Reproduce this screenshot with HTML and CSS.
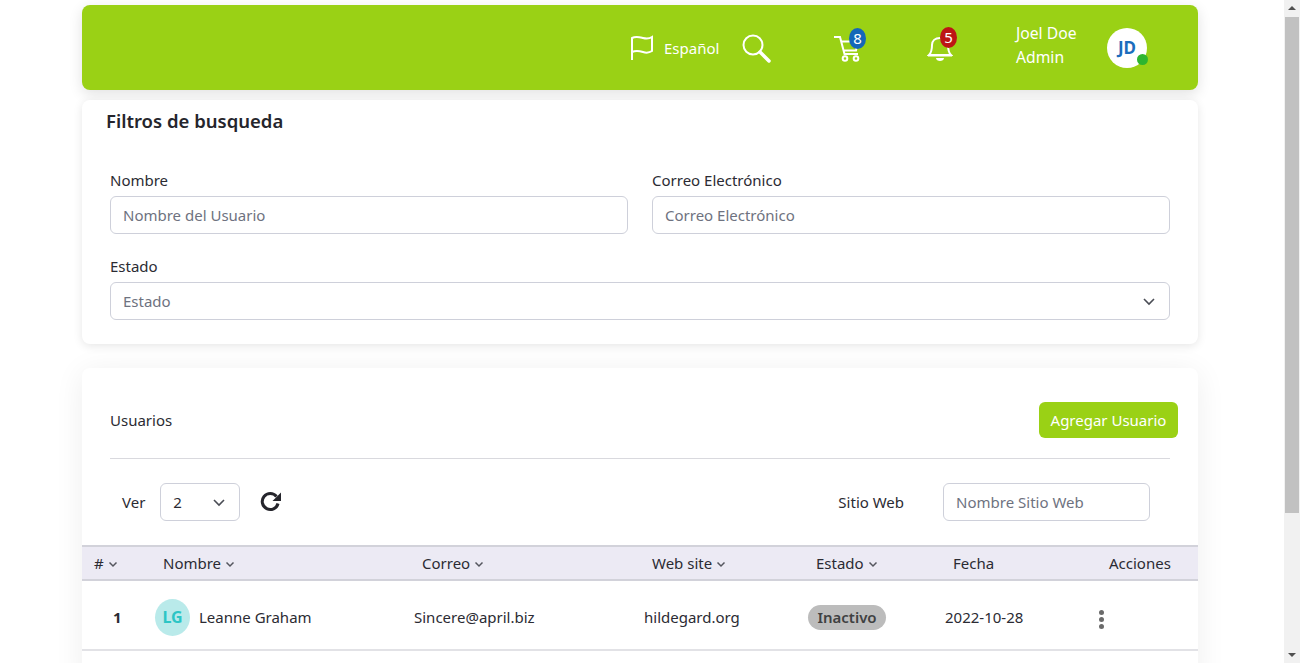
FILE: index.html
```html
<!DOCTYPE html>
<html lang="es">
<head>
    <meta charset="UTF-8">
    <title>Usuarios</title>
    <link rel="stylesheet" href="styles.css">
</head>
<body>
    <div class="page">
        <main class="content">
            <header class="topbar">
                <svg class="icon-flag" width="24" height="26" viewBox="0 0 24 26"><path d="M2 25V3c4-2 7-1 11 0s6 1 9-1v14c-3 2-6 2-9 1s-7-2-11 0"/></svg>
                <span class="lang">Español</span>
                <svg class="icon-search" width="30" height="30" viewBox="0 0 30 30"><circle cx="11" cy="11" r="9.5"/><path class="thick" d="M18 18l9 9"/></svg>
                <div class="icon-badge cart-wrap">
                    <svg width="28" height="28" viewBox="0 0 28 28"><path d="M1 2h6l4.500 17h13.500M8 6.500h17l-2 9H10"/><circle cx="12" cy="23.500" r="2.300"/><circle cx="23" cy="23.500" r="2.300"/></svg>
                    <span class="badge badge-blue">8</span>
                </div>
                <div class="icon-badge bell-wrap">
                    <svg width="26" height="28" viewBox="0 0 26 28"><path d="M2 21c3-3 3-6 3-10 0-4 3-7 8-7s8 3 8 7c0 4 0 7 3 10zM1 21.500h24"/><path class="filled" d="M9 24h8c0 2-2 3-4 3s-4-1-4-3z"/></svg>
                    <span class="badge badge-red">5</span>
                </div>
                <div class="user-info">
                    <span>Joel Doe</span>
                    <span>Admin</span>
                </div>
                <div class="avatar-top">JD<span class="online"></span></div>
            </header>

            <section class="card filters">
                <h2 class="filters-title">Filtros de busqueda</h2>
                <div class="filters-grid">
                    <div class="field">
                        <label for="nombre">Nombre</label>
                        <input type="text" id="nombre" placeholder="Nombre del Usuario">
                    </div>
                    <div class="field">
                        <label for="correo">Correo Electrónico</label>
                        <input type="text" id="correo" placeholder="Correo Electrónico">
                    </div>
                    <div class="field field-wide">
                        <label for="estado">Estado</label>
                        <div class="select muted" id="estado">Estado
                            <svg class="chevron" width="14" height="14" viewBox="0 0 14 14"><path d="M2 5l5 5 5-5"/></svg>
                        </div>
                    </div>
                </div>
            </section>

            <section class="card users">
                <div class="users-head">
                    <span>Usuarios</span>
                    <button type="button" class="btn-add">Agregar Usuario</button>
                </div>
                <hr class="divider">
                <div class="tools">
                    <span class="tools-ver">Ver</span>
                    <div class="select select-small">2
                        <svg class="chevron" width="14" height="14" viewBox="0 0 14 14"><path d="M2 5l5 5 5-5"/></svg>
                    </div>
                    <svg class="icon-refresh" width="22" height="22" viewBox="0 0 22 22"><path d="M18 12.500A8 8 0 1 1 16.500 5.500"/><path class="filled" d="M21 1.500v8.500h-8.500z"/></svg>
                    <span class="tools-site">Sitio Web</span>
                    <input type="text" class="site-input" placeholder="Nombre Sitio Web">
                </div>
                <table class="users-table">
                    <colgroup>
                        <col class="c-num"><col class="c-name"><col class="c-mail"><col class="c-web"><col class="c-state"><col class="c-date"><col class="c-act">
                    </colgroup>
                    <thead>
                        <tr>
                            <th class="th-num"># <svg class="sort" width="10" height="10" viewBox="0 0 10 10"><path d="M1.500 3.500L5 7l3.500-3.500"/></svg></th>
                            <th>Nombre <svg class="sort" width="10" height="10" viewBox="0 0 10 10"><path d="M1.500 3.500L5 7l3.500-3.500"/></svg></th>
                            <th>Correo <svg class="sort" width="10" height="10" viewBox="0 0 10 10"><path d="M1.500 3.500L5 7l3.500-3.500"/></svg></th>
                            <th>Web site <svg class="sort" width="10" height="10" viewBox="0 0 10 10"><path d="M1.500 3.500L5 7l3.500-3.500"/></svg></th>
                            <th>Estado <svg class="sort" width="10" height="10" viewBox="0 0 10 10"><path d="M1.500 3.500L5 7l3.500-3.500"/></svg></th>
                            <th>Fecha</th>
                            <th>Acciones</th>
                        </tr>
                    </thead>
                    <tbody>
                        <tr>
                            <td class="td-num">1</td>
                            <td><div class="name-cell"><span class="avatar-row">LG</span>Leanne Graham</div></td>
                            <td>Sincere@april.biz</td>
                            <td>hildegard.org</td>
                            <td><span class="status">Inactivo</span></td>
                            <td>2022-10-28</td>
                            <td><span class="dots"><i></i><i></i><i></i></span></td>
                        </tr>
                    </tbody>
                </table>
            </section>
        </main>
        <aside class="scrollbar">
            <span class="arrow arrow-up"></span>
            <span class="thumb"></span>
            <span class="arrow arrow-down"></span>
        </aside>
    </div>
</body>
</html>
```

FILE: styles.css
```css
* {
    box-sizing: border-box;
}

html, body {
    margin: 0;
    height: 100%;
    overflow: hidden;
}

body {
    font-family: "Noto Sans", "Open Sans", sans-serif;
    font-size: 15px;
    color: #2b2b33;
    background-color: #fff;
}

.page {
    display: flex;
    height: 663px;
}

.content {
    width: 1284px;
    height: 663px;
    padding: 5px 86px 0 82px;
    overflow: hidden;
}

/* top bar */
.topbar {
    display: flex;
    align-items: center;
    height: 85px;
    padding-right: 51px;
    justify-content: flex-end;
    background-color: #9ad115;
    color: #fff;
    border-radius: 8px;
    box-shadow: 0 4px 14px rgba(0, 0, 0, 0.12);
}

.topbar svg {
    fill: none;
    stroke: #fff;
    stroke-width: 2;
    display: block;
}

.topbar svg .filled {
    fill: #fff;
    stroke: none;
}

.topbar svg .thick {
    stroke-width: 3.5;
    stroke-linecap: round;
}

.lang {
    margin-left: 10px;
    width: 55px;
    white-space: nowrap;
}

.icon-search {
    margin-left: 23px;
    margin-top: 3px;
}

.icon-badge {
    position: relative;
}

.cart-wrap {
    margin-left: 61px;
    width: 28px;
    height: 28px;
    margin-top: 3px;
}

.bell-wrap {
    margin-left: 66px;
    width: 26px;
    height: 28px;
    margin-top: 1px;
}

.badge {
    position: absolute;
    top: -7px;
    left: 16px;
    width: 17px;
    height: 21px;
    border-radius: 50%;
    color: #fff;
    font-size: 15px;
    line-height: 21px;
    text-align: center;
}

.badge-blue {
    background-color: #1467b8;
}

.badge-red {
    top: -7px;
    left: 13px;
    background-color: #bd1515;
}

.user-info {
    display: flex;
    flex-direction: column;
    margin-left: 63px;
    width: 91px;
    padding-bottom: 6px;
    font-size: 15.700px;
    line-height: 24px;
}

.avatar-top {
    position: relative;
    width: 40px;
    height: 40px;
    border-radius: 50%;
    background-color: #fff;
    color: #1b6dbd;
    font-weight: 700;
    font-size: 17px;
    line-height: 40px;
    text-align: center;
}

.online {
    position: absolute;
    right: -1px;
    bottom: 3px;
    width: 11px;
    height: 11px;
    border-radius: 50%;
    background-color: #2fb52f;
}

/* cards */
.card {
    background-color: #fff;
    border-radius: 8px;
    box-shadow: 0 4px 24px rgba(0, 0, 0, 0.06);
}

.filters {
    margin-top: 10px;
    height: 244px;
    padding: 8px 28px 0 24px;
    box-shadow: 0 2px 10px rgba(0, 0, 0, 0.1);
}

.filters-title {
    margin: 0;
    font-size: 18.500px;
    font-weight: 600;
    line-height: 26px;
    color: #25252c;
}

.filters-grid {
    display: grid;
    grid-template-columns: 518px 518px;
    column-gap: 24px;
    row-gap: 20px;
    margin: 34px 0 0 4px;
}

.field-wide {
    grid-column: 1 / 3;
}

.field label {
    display: block;
    line-height: 24px;
    margin-bottom: 4px;
}

input {
    width: 100%;
    height: 38px;
    padding: 0 12px;
    font: inherit;
    color: #2b2b33;
    background-color: #fff;
    border: 1px solid #ced0da;
    border-radius: 6px;
}

input::placeholder {
    color: #6e7280;
    opacity: 1;
}

.select {
    display: flex;
    align-items: center;
    justify-content: space-between;
    height: 38px;
    padding: 0 13px 0 12px;
    border: 1px solid #ced0da;
    border-radius: 6px;
}

.muted {
    color: #6e7280;
}

.chevron {
    fill: none;
    stroke: #4a4d55;
    stroke-width: 1.600;
}

/* users */
.users {
    margin-top: 24px;
    height: 320px;
    padding-top: 34px;
    box-shadow: 0 4px 30px rgba(0, 0, 0, 0.07);
}

.users-head {
    display: flex;
    align-items: center;
    justify-content: space-between;
    padding: 0 20px 0 28px;
}

.btn-add {
    width: 139px;
    height: 36px;
    padding: 0;
    font: inherit;
    color: #fff;
    background-color: #9ad115;
    border: none;
    border-radius: 6px;
}

.divider {
    margin: 20px 28px 0;
    border: none;
    border-top: 1px solid #d9d9de;
}

.tools {
    display: flex;
    align-items: center;
    height: 38px;
    margin-top: 24px;
    padding-left: 40px;
}

.select-small {
    width: 80px;
    margin-left: 15px;
}

.icon-refresh {
    margin-left: 20px;
    fill: none;
    stroke: #25252c;
    stroke-width: 3;
}

.icon-refresh .filled {
    fill: #25252c;
    stroke: none;
}

.tools-site {
    margin-left: 556px;
}

.site-input {
    width: 207px;
    margin-left: 39px;
}

.users-table {
    width: 100%;
    margin-top: 24px;
    border-collapse: collapse;
    table-layout: fixed;
}

.c-num { width: 65px; }
.c-name { width: 259px; }
.c-mail { width: 230px; }
.c-web { width: 164px; }
.c-state { width: 137px; }
.c-date { width: 156px; }

.users-table th {
    height: 34px;
    padding: 0 0 0 16px;
    font-weight: 400;
    text-align: left;
    white-space: nowrap;
    background-color: #eceaf4;
    border-top: 2px solid #d2d2da;
    border-bottom: 2px solid #d2d2da;
}

.users-table th.th-num {
    padding-left: 12px;
}

.users-table td {
    height: 70px;
    padding: 4px 0 0 8px;
    white-space: nowrap;
    border-bottom: 2px solid #e2e2e6;
}

.users-table td.td-num {
    padding-left: 31px;
    font-weight: 700;
}

.sort {
    fill: none;
    stroke: #55565e;
    stroke-width: 1.500;
}

.name-cell {
    display: flex;
    align-items: center;
    gap: 9px;
}

.avatar-row {
    width: 35px;
    height: 37px;
    border-radius: 50%;
    background-color: #b9eaea;
    color: #2cc5c5;
    font-size: 16px;
    font-weight: 700;
    line-height: 37px;
    text-align: center;
}

.status {
    display: inline-block;
    width: 78px;
    height: 25px;
    line-height: 25px;
    text-align: center;
    font-weight: 600;
    color: #3f4142;
    background-color: #bcbcbc;
    border-radius: 13px;
}

.dots {
    display: flex;
    flex-direction: column;
    gap: 2px;
    width: 5px;
    margin: 4px 0 0 -2px;
}

.dots i {
    width: 5px;
    height: 5px;
    border-radius: 50%;
    background-color: #6a6a6a;
}

/* fake window scrollbar */
.scrollbar {
    position: relative;
    width: 16px;
    height: 663px;
    background-color: #f1f1f1;
}

.thumb {
    position: absolute;
    top: 17px;
    left: 1px;
    width: 14px;
    height: 496px;
    background-color: #c1c1c1;
}

.arrow {
    position: absolute;
    left: 4px;
    border-left: 4px solid transparent;
    border-right: 4px solid transparent;
}

.arrow-up {
    top: 6px;
    border-bottom: 4px solid #505050;
}

.arrow-down {
    bottom: 6px;
    border-top: 4px solid #505050;
}
```
